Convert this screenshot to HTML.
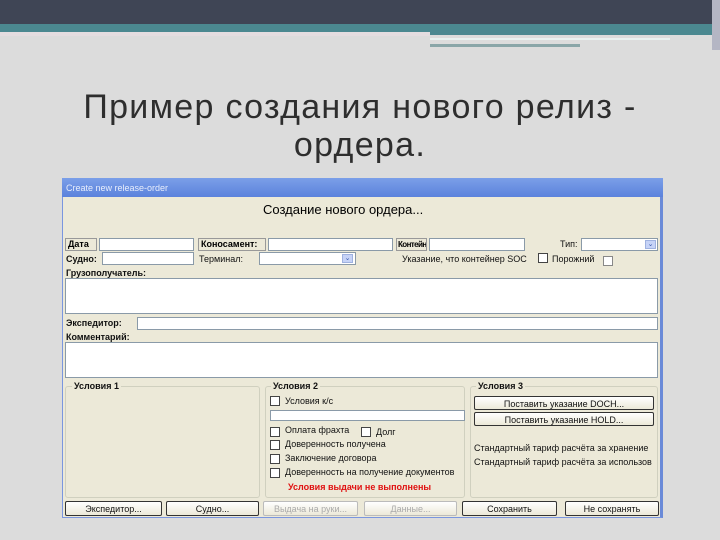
<!DOCTYPE html>
<html><head><meta charset="utf-8"><style>
*{margin:0;padding:0;box-sizing:border-box}
body{width:720px;height:540px;background:#dcdcdc;position:relative;overflow:hidden;font-family:"Liberation Sans","DejaVu Sans",sans-serif}
.a{position:absolute}
.t{font-size:9px;color:#111;white-space:nowrap}
.b{font-weight:bold}
.in{background:#fff;border:1px solid #8a9aa8}
.lb{background:#ece9d8;border:1px solid #999;font-size:9px;font-weight:bold;padding-left:2px;line-height:11px;overflow:hidden;white-space:nowrap}
.cb{background:#fff;border:1px solid #444;width:10px;height:10px}
.btn{background:linear-gradient(#fff,#ece9d8);border:1px solid #333;border-radius:2px;font-size:9px;text-align:center;line-height:14px;color:#111}
.dis{color:#aaa;border-color:#bbb}
.grp{border:1px solid #d0d0bf;border-radius:3px}
.dd{background:#c6d3f7;border:1px solid #9fb2e0;width:11px;height:9px;font-size:7px;line-height:8px;text-align:center;color:#3a5ab0}
</style></head><body>
<div class="a" style="left:0;top:0;width:720px;height:24px;background:#3f4555"></div>
<div class="a" style="left:0;top:24px;width:720px;height:8px;background:#4b8890"></div>
<div class="a" style="left:430px;top:32px;width:285px;height:3px;background:#4b8890"></div>
<div class="a" style="left:430px;top:38px;width:240px;height:2px;background:#e8f2f0"></div>
<div class="a" style="left:430px;top:44px;width:150px;height:3px;background:#8aa6a8"></div>
<div class="a" style="left:0;top:32px;width:430px;height:4px;background:#e4dde0"></div>
<div class="a" style="left:712px;top:0;width:8px;height:50px;background:#b4b6c4"></div>
<div class="a" style="left:0;top:88px;width:720px;text-align:center;font-size:34px;color:#2e2e2e;letter-spacing:1.3px;line-height:38px">Пример создания нового релиз -<br>ордера.</div>

<div class="a" style="left:62px;top:178px;width:601px;height:340px;background:#ece9d8;border:1px solid #7a96df;border-right:3px solid #6a8ad8"></div>
<div class="a" style="left:62px;top:178px;width:601px;height:19px;background:linear-gradient(#7b9fe8,#5b82dc);"></div>
<div class="a t" style="left:66px;top:183px;color:#e8eefc;font-size:9px">Create new release-order</div>
<div class="a" style="left:263px;top:202px;font-size:13px;color:#000">Создание нового ордера...</div>

<div class="a lb" style="left:65px;top:238px;width:32px;height:13px">Дата</div>
<div class="a in" style="left:99px;top:238px;width:95px;height:13px"></div>
<div class="a lb" style="left:198px;top:238px;width:68px;height:13px">Коносамент:</div>
<div class="a in" style="left:268px;top:238px;width:125px;height:13px"></div>
<div class="a lb" style="left:396px;top:238px;width:31px;height:13px;font-size:8px;letter-spacing:-0.6px;padding-left:1px">Контейнер:</div>
<div class="a in" style="left:429px;top:238px;width:96px;height:13px"></div>
<div class="a t" style="left:560px;top:239px">Тип:</div>
<div class="a in" style="left:581px;top:238px;width:77px;height:13px"></div>
<div class="a dd" style="left:645px;top:240px">⌄</div>

<div class="a t b" style="left:66px;top:254px">Судно:</div>
<div class="a in" style="left:102px;top:252px;width:92px;height:13px"></div>
<div class="a t" style="left:199px;top:254px">Терминал:</div>
<div class="a in" style="left:259px;top:252px;width:97px;height:13px"></div>
<div class="a dd" style="left:342px;top:254px">⌄</div>
<div class="a t" style="left:402px;top:254px">Указание, что контейнер SOC</div>
<div class="a cb" style="left:538px;top:253px"></div>
<div class="a t" style="left:552px;top:254px">Порожний</div>
<div class="a cb" style="left:603px;top:256px;border-color:#888"></div>

<div class="a t b" style="left:66px;top:268px">Грузополучатель:</div>
<div class="a in" style="left:65px;top:278px;width:593px;height:36px"></div>
<div class="a t b" style="left:66px;top:318px">Экспедитор:</div>
<div class="a in" style="left:137px;top:317px;width:521px;height:13px"></div>
<div class="a t b" style="left:66px;top:332px">Комментарий:</div>
<div class="a in" style="left:65px;top:342px;width:593px;height:36px"></div>

<div class="a grp" style="left:65px;top:386px;width:195px;height:112px"></div>
<div class="a grp" style="left:265px;top:386px;width:200px;height:112px"></div>
<div class="a grp" style="left:470px;top:386px;width:188px;height:112px"></div>
<div class="a t b" style="left:72px;top:381px;background:#ece9d8;padding:0 2px">Условия 1</div>
<div class="a t b" style="left:271px;top:381px;background:#ece9d8;padding:0 2px">Условия 2</div>
<div class="a t b" style="left:476px;top:381px;background:#ece9d8;padding:0 2px">Условия 3</div>

<div class="a cb" style="left:270px;top:396px"></div>
<div class="a t" style="left:285px;top:396px">Условия к/с</div>
<div class="a in" style="left:270px;top:410px;width:195px;height:11px"></div>
<div class="a cb" style="left:270px;top:427px"></div>
<div class="a t" style="left:285px;top:425px">Оплата фрахта</div>
<div class="a cb" style="left:361px;top:427px"></div>
<div class="a t" style="left:376px;top:427px">Долг</div>
<div class="a cb" style="left:270px;top:440px"></div>
<div class="a t" style="left:285px;top:439px">Доверенность получена</div>
<div class="a cb" style="left:270px;top:454px"></div>
<div class="a t" style="left:285px;top:453px">Заключение договора</div>
<div class="a cb" style="left:270px;top:468px"></div>
<div class="a t" style="left:285px;top:467px">Доверенность на получение документов</div>
<div class="a t b" style="left:288px;top:482px;color:#e01010">Условия выдачи не выполнены</div>

<div class="a btn" style="left:474px;top:396px;width:180px;height:14px">Поставить указание DOCH...</div>
<div class="a btn" style="left:474px;top:412px;width:180px;height:14px">Поставить указание HOLD...</div>
<div class="a t" style="left:474px;top:443px">Стандартный тариф расчёта за хранение</div>
<div class="a t" style="left:474px;top:457px">Стандартный тариф расчёта за использов</div>

<div class="a btn" style="left:65px;top:501px;width:97px;height:15px">Экспедитор...</div>
<div class="a btn" style="left:166px;top:501px;width:93px;height:15px">Судно...</div>
<div class="a btn dis" style="left:263px;top:501px;width:95px;height:15px">Выдача на руки...</div>
<div class="a btn dis" style="left:364px;top:501px;width:93px;height:15px">Данные...</div>
<div class="a btn" style="left:462px;top:501px;width:95px;height:15px">Сохранить</div>
<div class="a btn" style="left:565px;top:501px;width:94px;height:15px">Не сохранять</div>
</body></html>
